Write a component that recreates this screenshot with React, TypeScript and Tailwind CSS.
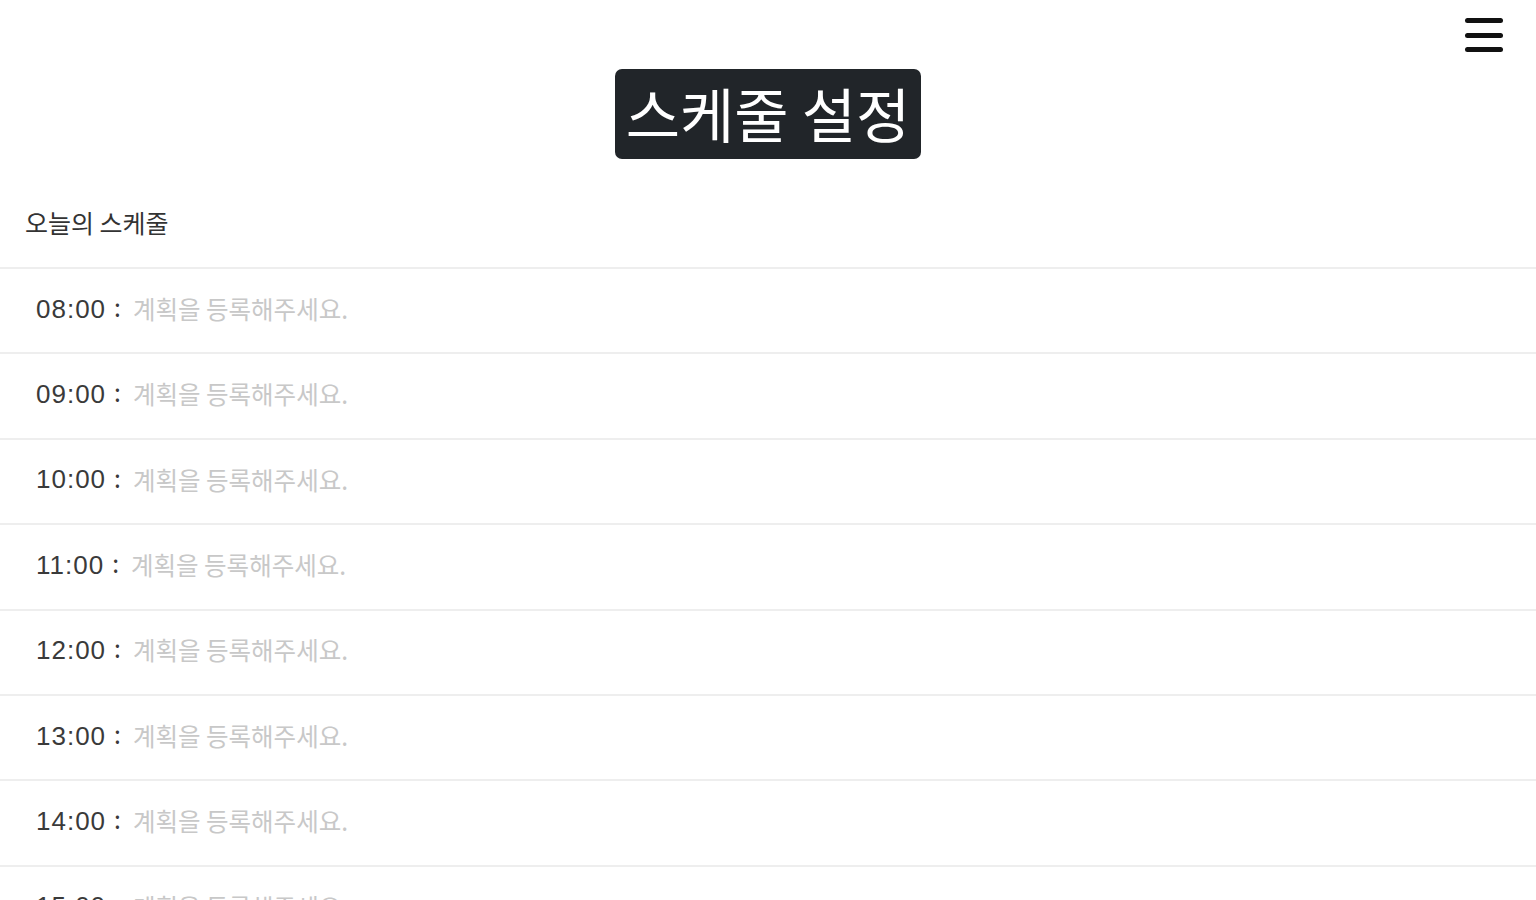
import React from 'react';

const hours = ['08:00', '09:00', '10:00', '11:00', '12:00', '13:00', '14:00', '15:00', '16:00', '17:00'];

const font = { fontFamily: '"Noto Sans CJK KR", "Noto Sans", sans-serif' };

export default function App() {
  return (
    <div className="min-h-screen bg-white text-[#212529]" style={font}>
      {/* Top bar */}
      <div className="flex justify-end pt-[17px] pr-[33px]">
        <button className="flex h-[36px] w-[38px] flex-col justify-between py-[1px]">
          <span className="block h-[5px] w-full rounded-sm bg-[#111]" />
          <span className="block h-[5px] w-full rounded-sm bg-[#111]" />
          <span className="block h-[5px] w-full rounded-sm bg-[#111]" />
        </button>
      </div>

      {/* Title */}
      <div className="flex justify-center mt-[16px]">
        <h1 className="rounded-[7px] bg-[#212529] px-[11px] pb-[3px] h-[90px] flex items-center text-[59px] leading-none text-white">
          스케줄 설정
        </h1>
      </div>

      {/* Section */}
      <div className="mt-[25px]">
        <div className="h-[83px] pl-[25px] pb-[6px] flex items-center text-[25px] text-[#333]">오늘의 스케줄</div>
        <ul className="border-t-2 border-[#eeeeee]">
          {hours.map((h) => (
            <li key={h} className="h-[85.4px] border-b-2 border-[#eeeeee] pl-[36px] pb-[3px] flex items-center text-[24.5px]">
              <span className="text-[#3a3a3a] tracking-[1px]" style={{ fontFamily: '"Liberation Sans", sans-serif', fontSize: '26px' }}>
                {h}
              </span>
              <span className="text-[#3a3a3a] ml-[8px] mr-[12px] -translate-y-[2px]">:</span>
              <span className="text-[#c8c8c8]">계획을 등록해주세요.</span>
            </li>
          ))}
        </ul>
      </div>
    </div>
  );
}
